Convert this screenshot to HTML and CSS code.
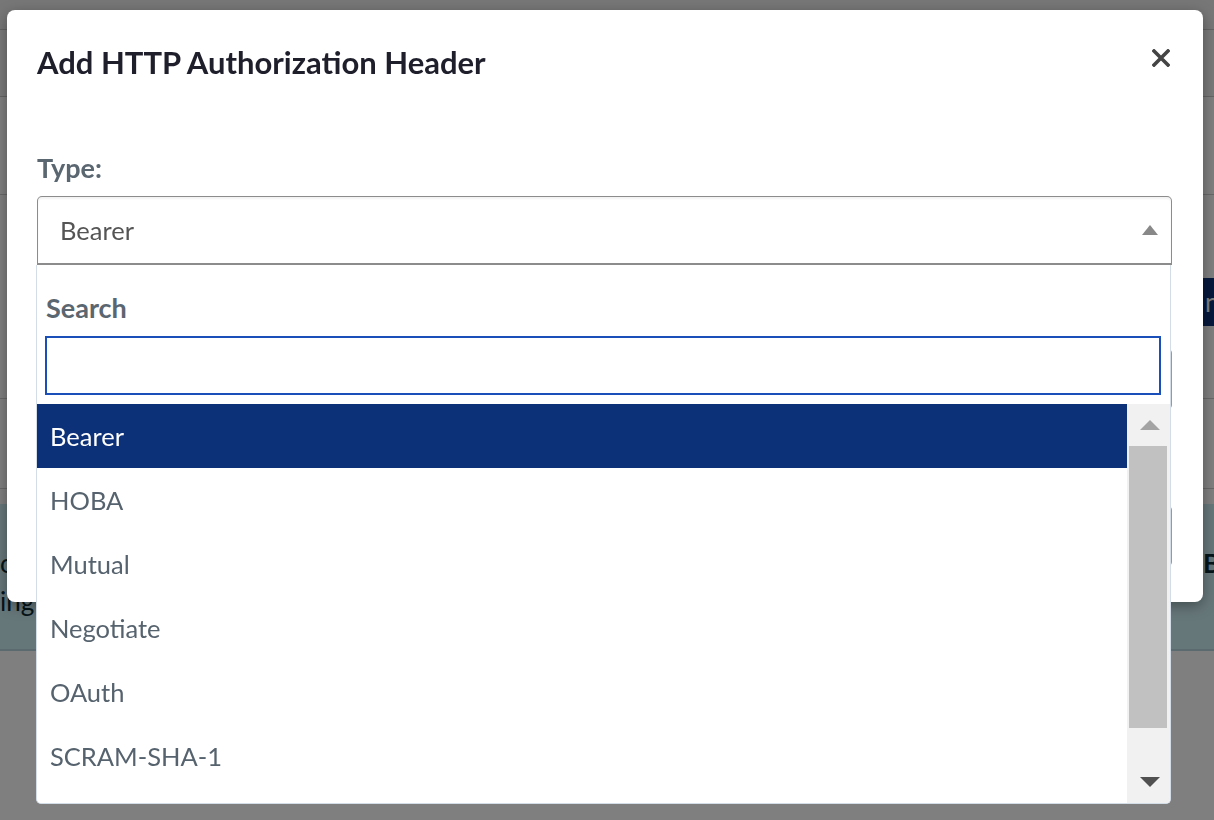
FILE: index.html
```html
<!DOCTYPE html>
<html lang="en">
<head>
  <meta charset="UTF-8">
  <meta name="viewport" content="width=device-width, initial-scale=1.0">
  <title>Add HTTP Authorization Header</title>
  <link rel="stylesheet" href="styles.css">
</head>
<body>
  <!-- page behind the dialog -->
  <div class="page">
    <div class="topbar"></div>
    <div class="nav"></div>
    <div class="section s1"></div>
    <div class="section s2">
      <button class="page-btn">nt</button>
    </div>
    <div class="section s3"></div>
    <div class="alert">
      <div class="alert-text">on<br>ing</div>
      <div class="alert-side">B</div>
    </div>
  </div>

  <div class="overlay"></div>

  <div class="modal">
    <div class="modal-header">
      <h2>Add HTTP Authorization Header</h2>
      <button class="close" aria-label="Close">
        <svg width="18" height="18" viewBox="0 0 18 18">
          <path d="M2 2 L16 16 M16 2 L2 16" stroke="#444" stroke-width="3.6" stroke-linecap="square"/>
        </svg>
      </button>
    </div>

    <div class="modal-body">
      <label class="label">Type:</label>
      <div class="select open">
        <span class="select-value">Bearer</span>
        <svg class="select-arrow" width="16" height="10" viewBox="0 0 16 10">
          <path d="M8 0 L16 10 L0 10 Z" fill="#888"/>
        </svg>

        <div class="dropdown">
          <label class="label search-label">Search</label>
          <input type="text" class="search">
          <div class="results">
            <ul class="options">
              <li class="option active">Bearer</li>
              <li class="option">HOBA</li>
              <li class="option">Mutual</li>
              <li class="option">Negotiate</li>
              <li class="option">OAuth</li>
              <li class="option">SCRAM-SHA-1</li>
            </ul>
            <div class="scrollbar">
              <div class="sb-btn">
                <svg width="20" height="10" viewBox="0 0 20 10"><path d="M10 0 L20 10 L0 10 Z" fill="#a3a3a3"/></svg>
              </div>
              <div class="sb-thumb"></div>
              <div class="sb-track"></div>
              <div class="sb-btn">
                <svg width="20" height="10" viewBox="0 0 20 10"><path d="M0 0 L20 0 L10 10 Z" fill="#505050"/></svg>
              </div>
            </div>
          </div>
        </div>
      </div>

      <div class="field f1"></div>
      <div class="field f2"></div>
    </div>
  </div>
</body>
</html>
```

FILE: styles.css
```css
body {
  font-family: 'Lato', 'Liberation Sans', sans-serif;
  background-color: #fff;
  margin: 0;
  padding: 0;
  overflow: hidden;
  height: 820px;
}

/* background page */
.page {
  width: 1214px;
}
.topbar {
  height: 29px;
  background-color: #eeeeee;
  border-bottom: 1px solid #c8c8c8;
}
.nav {
  height: 66px;
  background-color: #f2f2f2;
  border-bottom: 1px solid #c8c8c8;
}
.section {
  border-bottom: 1px solid #d0d0d0;
}
.s1 {
  height: 97px;
}
.s2 {
  height: 204px;
  padding-left: 1199px;
  box-sizing: border-box;
}
.page-btn {
  margin-top: 83px;
  height: 48px;
  padding: 0 6px;
  background-color: #0d3178;
  color: #fff;
  border: none;
  font-family: inherit;
  font-size: 26px;
}
.s3 {
  height: 89px;
}
.alert {
  margin-top: 15px;
  height: 145px;
  background-color: #cdeef5;
  border-bottom: 2px solid #b7d5dc;
  display: grid;
  grid-template-columns: 1203px auto;
  color: #0b2a33;
  font-size: 26px;
}
.alert-text {
  padding-top: 40px;
  line-height: 38px;
}
.alert-side {
  padding-top: 40px;
  line-height: 38px;
  font-weight: 700;
}

.overlay {
  position: fixed;
  inset: 0;
  background-color: rgba(0, 0, 0, 0.5);
}

/* dialog */
.modal {
  position: absolute;
  left: 7px;
  top: 10px;
  width: 1196px;
  height: 592px;
  background-color: #fff;
  border-radius: 8px;
  box-shadow: 0 4px 14px rgba(0, 0, 0, 0.35);
  padding: 0 31px 0 30px;
  box-sizing: border-box;
}
.modal-header {
  display: flex;
  justify-content: space-between;
  align-items: flex-start;
  padding-top: 34px;
}
.modal-header h2 {
  margin: 0;
  font-size: 31px;
  line-height: 36px;
  font-weight: 700;
  color: #1f1f2c;
}
.close {
  background: none;
  border: none;
  padding: 0;
  margin: 5px 2px 0 0;
  width: 18px;
  height: 18px;
  cursor: pointer;
}
.close svg {
  display: block;
}

.modal-body {
  padding-top: 72px;
}
.label {
  display: block;
  font-size: 27px;
  line-height: 32px;
  font-weight: 700;
  color: #5a6670;
}

.select {
  position: relative;
  margin-top: 12px;
  height: 69px;
  border: 1px solid #8c8c8c;
  border-bottom-width: 2px;
  border-radius: 5px 5px 0 0;
  box-sizing: border-box;
  display: flex;
  align-items: center;
  justify-content: space-between;
  padding: 0 13px 0 22px;
  box-shadow: inset 0 2px 2px rgba(0, 0, 0, 0.05);
}
.select-value {
  font-size: 25.5px;
  color: #555;
}
.select-arrow {
  display: block;
}

.dropdown {
  position: absolute;
  top: calc(100% + 2px);
  left: -2px;
  width: 1135px;
  height: 539px;
  background-color: #fff;
  border: 1px solid #d3dde8;
  border-top: none;
  border-radius: 0 0 5px 5px;
  box-sizing: border-box;
  display: flex;
  flex-direction: column;
  z-index: 2;
}
.search-label {
  margin: 27px 0 0 9px;
}
.search {
  margin: 12px 9px 0 8px;
  height: 59px;
  border: 2px solid #1a4fba;
  box-sizing: border-box;
  font-family: inherit;
  font-size: 25px;
  outline: none;
}

.results {
  flex: 1;
  display: flex;
  margin-top: 9px;
  min-height: 0;
  overflow: hidden;
  border-radius: 0 0 4px 4px;
}
.options {
  flex: 1;
  list-style: none;
  margin: 0;
  padding: 0;
  overflow: hidden;
}
.option {
  height: 64px;
  line-height: 64px;
  padding-left: 13px;
  font-size: 25.5px;
  color: #56636e;
}
.option.active {
  background-color: #0d3178;
  color: #fff;
}

.scrollbar {
  width: 43px;
  background-color: #f1f1f1;
  display: flex;
  flex-direction: column;
}
.sb-btn {
  height: 42px;
  display: flex;
  align-items: center;
  justify-content: center;
}
.sb-btn svg {
  display: block;
  margin-left: 2px;
}
.sb-thumb {
  height: 282px;
  margin: 0 3px 0 2px;
  background-color: #c1c1c1;
}
.sb-track {
  flex: 1;
}

.field {
  height: 62px;
  border: 1px solid #999;
  border-radius: 5px;
  box-sizing: border-box;
}
.f1 {
  margin-top: 83px;
}
.f2 {
  margin-top: 95px;
}
```
